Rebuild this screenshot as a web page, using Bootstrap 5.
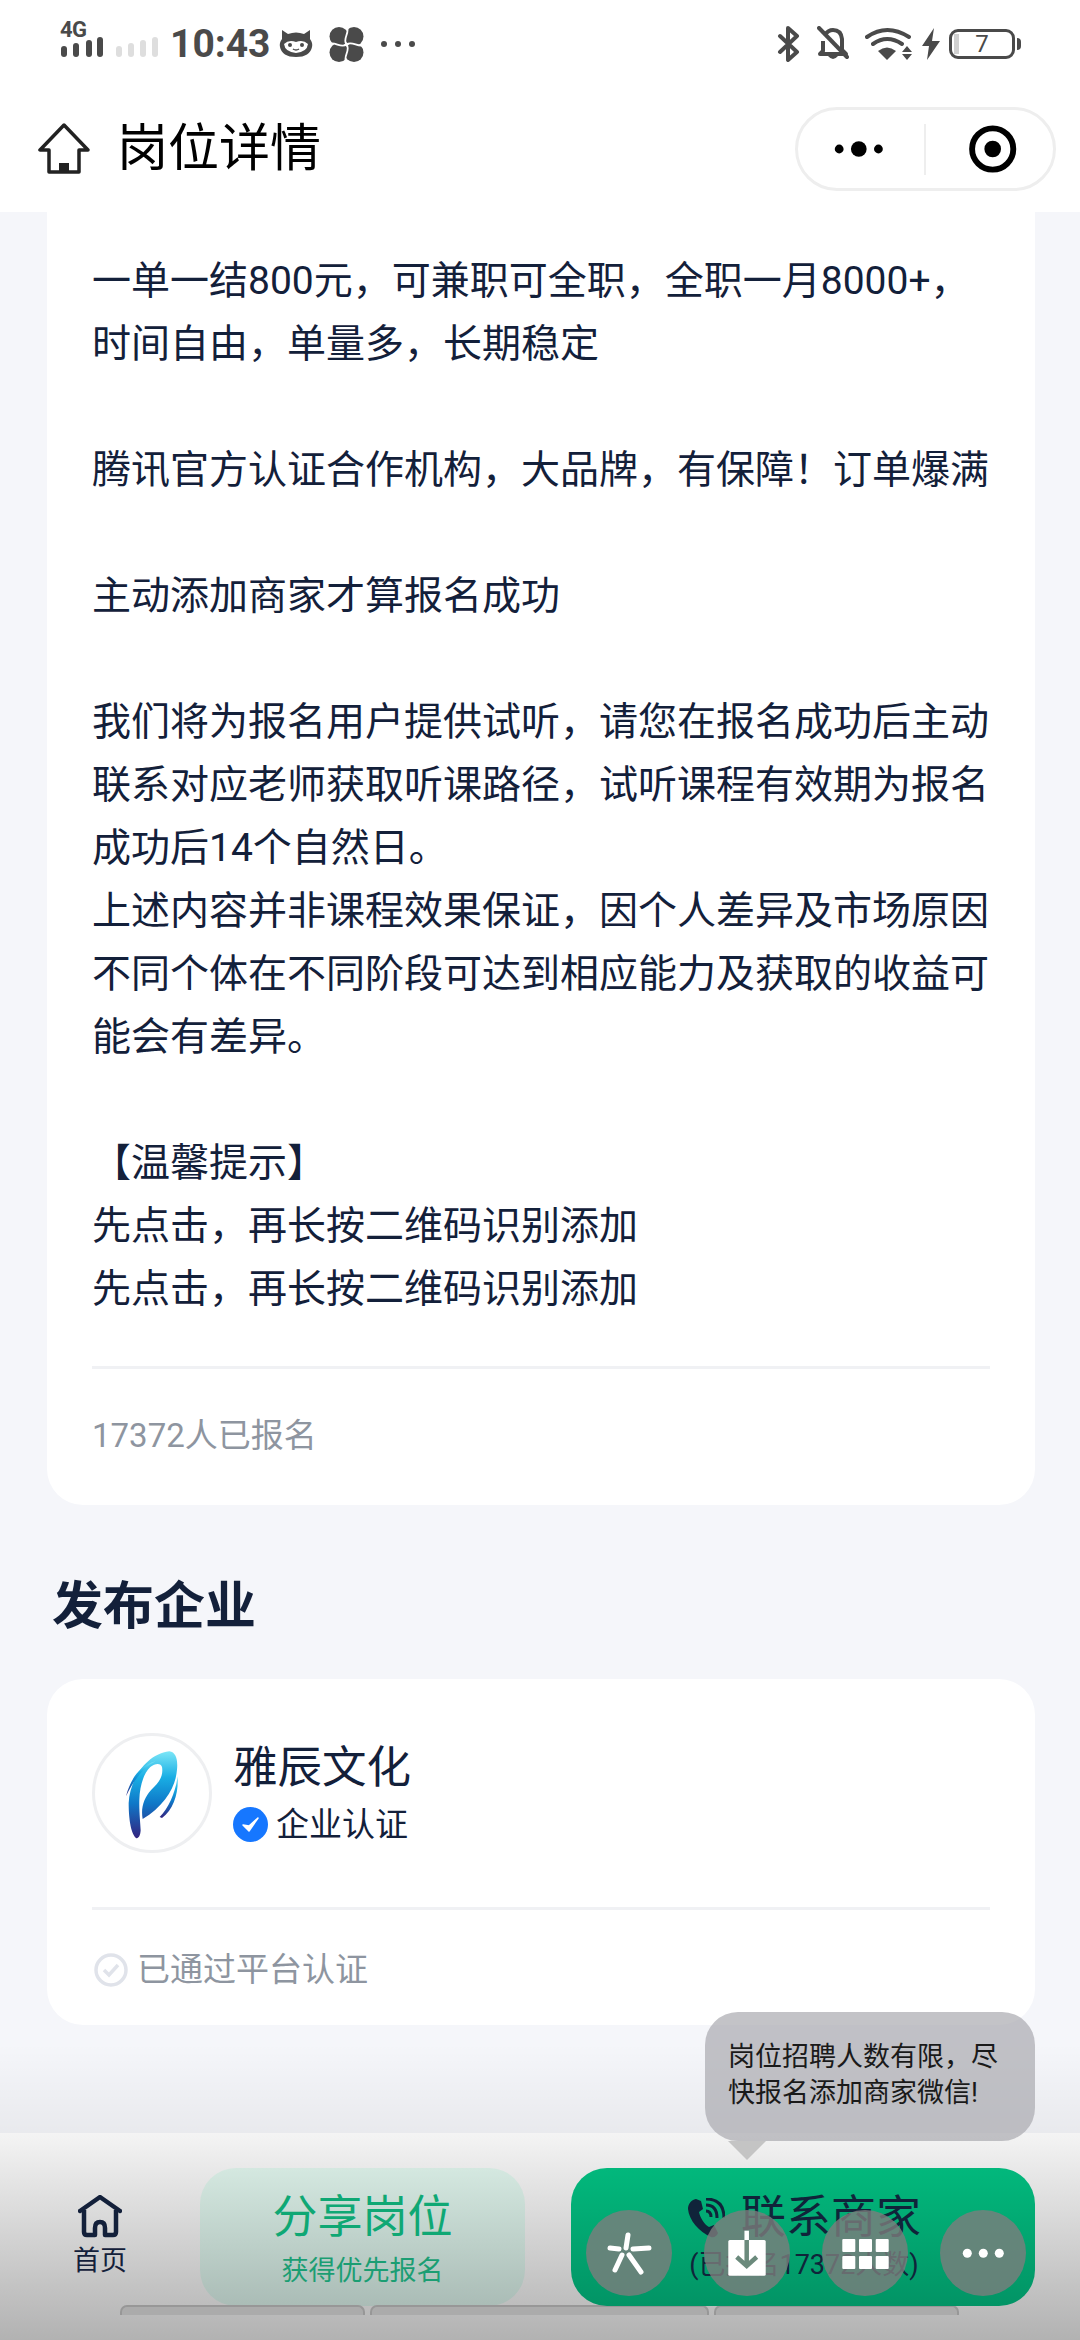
<!DOCTYPE html>
<html lang="zh-CN">
<head>
    <meta charset="UTF-8">
    <meta name="viewport" content="width=device-width, initial-scale=1.0">
    <title>岗位详情</title>
    <link href="https://cdn.jsdelivr.net/npm/bootstrap@5.3.0/dist/css/bootstrap.min.css" rel="stylesheet">
    <style>
        html, body { height: 100%; }
        body { font-family: Roboto, "Noto Sans CJK SC", sans-serif; background: #f5f6fa; color: #13203a; }
        .screen { position: relative; width: 1080px; height: 2340px; overflow: hidden; }

        .top-area { background: #fff; height: 212px; }
        .status-row { height: 88px; padding: 0 59px 0 60px; color: #4a4a4a; }
        .signal-wrap { position: relative; width: 100px; height: 40px; margin-right: 10px; }
        .net-type { position: absolute; left: 0; top: -4px; font-size: 22px; font-weight: 700; line-height: 20px; letter-spacing: -.5px; }
        .clock { font-size: 39px; font-weight: 700; line-height: 44px; }
        .batt { position: relative; width: 66px; height: 30px; border: 3px solid #4a4a4a; border-radius: 9px; font-size: 24px; line-height: 24px; text-align: center; color: #4a4a4a; margin-right: 6px; }
        .batt::before { content: ""; position: absolute; left: 2px; top: 2px; bottom: 2px; width: 5px; background: #d0d0d0; }
        .batt::after { content: ""; position: absolute; right: -9px; top: 6px; width: 4px; height: 12px; background: #4a4a4a; border-radius: 0 4px 4px 0; }

        .title-row { height: 124px; padding: 0 24px 2px 38px; }
        .page-title { font-size: 51px; line-height: 60px; color: #000; margin: 0 0 0 27px; font-weight: 400; }
        .capsule { width: 261px; height: 84px; border: 3px solid #eeeeee; border-radius: 42px; }
        .capsule-sep { width: 2px; height: 51px; background: #eeeeee; }

        .info-card { background: #fff; margin: 0 45px 0 47px; border-radius: 36px; }
        .info-card.first { border-radius: 0 0 36px 36px; padding: 38px 45px 0; height: 1293px; }
        .desc { font-size: 39px; line-height: 63px; color: #13203a; white-space: nowrap; }
        .hair { height: 3px; background: #f0f1f4; }
        .first .hair { margin-top: 45px; }
        .count-note { font-size: 33px; line-height: 44px; color: #8e95a0; margin-top: 45px; }

        .sec-title { font-size: 51px; line-height: 60px; font-weight: 700; margin: 72px 0 42px 52px; color: #13203a; }
        .info-card.second { height: 346px; padding: 54px 45px 0; }
        .avatar { width: 120px; height: 120px; border: 3px solid #eeeff1; border-radius: 50%; }
        .co-block { margin-left: 21px; }
        .co-name { font-size: 44.5px; line-height: 56px; color: #13203a; }
        .co-tag { font-size: 33px; line-height: 44px; color: #13203a; margin-top: 7px; }
        .second .hair { margin-top: 54px; }
        .verified { font-size: 33px; line-height: 44px; color: #8e95a0; margin-top: 38px; padding-left: 2px; }
        .verified svg { margin-right: 9px; }

        .bottom-bar { position: absolute; left: 0; right: 0; bottom: 0; height: 207px; background: linear-gradient(#f4f4f4, #b2b2b2); }
        .bottom-bar::before { content: ""; position: absolute; left: 0; right: 0; bottom: 100%; height: 90px; background: linear-gradient(rgba(0,0,0,0), rgba(0,0,0,.05)); }
        .bar-row { padding-top: 35px; height: 173px; }
        .home-tab { width: 200px; font-size: 27px; line-height: 36px; color: #13203a; padding-top: 27px; }
        .share-btn { width: 325px; height: 138px; border-radius: 36px; background: linear-gradient(#d4e8e0, #aabcb6); color: #0fa874; padding-top: 27px; }
        .contact-btn { position: relative; width: 464px; height: 138px; margin-left: 46px; border-radius: 36px; background: linear-gradient(#02b87c, #029465); color: #10243a; padding: 27px 0 0 2px; }
        .btn-big { font-size: 45px; line-height: 46px; }
        .share-sub { font-size: 27px; line-height: 30px; margin-top: 15px; color: #1b9e73; }
        .contact-sub { font-size: 27px; line-height: 36px; margin-top: 6px; }

        .tip { position: absolute; left: 134px; bottom: 165px; width: 330px; padding: 27px 23px 30px; border-radius: 33px; background: rgba(170,170,175,.7); font-size: 27px; line-height: 36px; color: #1a1a1a; }
        .tip::after { content: ""; position: absolute; left: 23px; top: 100%; border-style: solid; border-width: 19px 19px 0; border-color: #c4c4c4 transparent transparent; }

        .float-tools { position: absolute; left: 586px; top: 2210px; gap: 32px; }
        .tool { width: 86px; height: 86px; border-radius: 50%; background: rgba(125,125,125,.8); }
        .nub-row { padding-left: 120px; margin-top: -1px; gap: 5px; }
        .nub { height: 10px; border: 2px solid #979797; border-bottom: 0; border-radius: 7px 7px 0 0; background: #ababab; }
    </style>
</head>
<body>
<div class="screen">
    <div class="top-area">
        <div class="status-row d-flex align-items-center justify-content-between">
            <div class="d-flex align-items-center">
                <div class="signal-wrap">
                    <span class="net-type">4G</span>
                    <svg width="100" height="40" viewBox="0 0 100 40" class="d-block">
                        <g fill="#4a4a4a"><rect x="1" y="22" width="6" height="11" rx="3"/><rect x="13" y="19" width="6" height="14" rx="3"/><rect x="26" y="16" width="6" height="17" rx="3"/><rect x="37" y="13" width="6" height="20" rx="3"/></g>
                        <g fill="#dedede"><rect x="56" y="22" width="6" height="11" rx="3"/><rect x="68" y="19" width="6" height="14" rx="3"/><rect x="80" y="16" width="6" height="17" rx="3"/><rect x="92" y="13" width="6" height="20" rx="3"/></g>
                    </svg>
                </div>
                <span class="clock">10:43</span>
                <svg width="34" height="30" viewBox="0 0 34 30" class="ms-2">
                    <path d="M3 1 L9 5 Q17 2 25 5 L31 1 L31 10 Q34 14 33 18 Q31 28 17 28 Q3 28 1 18 Q0 14 3 10 Z" fill="#4a4a4a"/>
                    <path d="M5 15 Q10 10 17 13 Q24 10 29 15 Q28 23 17 24 Q6 23 5 15 Z" fill="#fff"/>
                    <circle cx="11" cy="16" r="2" fill="#4a4a4a"/><circle cx="23" cy="16" r="2" fill="#4a4a4a"/>
                    <path d="M14 20 Q17 22 20 20" stroke="#4a4a4a" stroke-width="1.5" fill="none"/>
                </svg>
                <svg width="35" height="35" viewBox="0 0 35 35" class="ms-3">
                    <g fill="#4a4a4a">
                        <circle cx="10" cy="9.5" r="9.5"/><circle cx="25" cy="9.5" r="9.5"/><circle cx="10" cy="25.5" r="9.5"/><circle cx="25" cy="25.5" r="9.5"/>
                    </g>
                    <g fill="none" stroke="#fff" stroke-width="1.8">
                        <path d="M17.5 17.5 C13 12 21 6 18 0"/>
                        <path d="M17.5 17.5 C23 13 29 21 35 18"/>
                        <path d="M17.5 17.5 C22 23 14 29 17 35"/>
                        <path d="M17.5 17.5 C12 22 6 14 0 17"/>
                    </g>
                </svg>
                <svg width="36" height="8" viewBox="0 0 36 8" class="ms-3"><g fill="#4a4a4a"><circle cx="4" cy="4" r="3"/><circle cx="18" cy="4" r="3"/><circle cx="32" cy="4" r="3"/></g></svg>
            </div>
            <div class="d-flex align-items-center">
                <svg width="24" height="36" viewBox="0 0 24 36"><path d="M3 10 L20 26 L11 34 V2 L20 10 L3 26" fill="none" stroke="#4a4a4a" stroke-width="4" stroke-linecap="round" stroke-linejoin="round"/></svg>
                <svg width="32" height="36" viewBox="0 0 32 36" class="ms-3">
                    <path d="M8 9 Q11 4 16 4 Q24 4 25 13 V24 L29 28 H3 L6 25 V15" fill="none" stroke="#4a4a4a" stroke-width="4" stroke-linejoin="round"/>
                    <path d="M11 30 Q16 36 21 30 Z" fill="#4a4a4a"/>
                    <path d="M2 2 L30 31" stroke="#4a4a4a" stroke-width="4" stroke-linecap="round"/>
                </svg>
                <svg width="48" height="34" viewBox="0 0 48 34" class="ms-3">
                    <path d="M2 10 Q22 -4 44 10 M8 17 Q22 7 37 17" fill="none" stroke="#4a4a4a" stroke-width="4" stroke-linecap="round"/>
                    <path d="M13 24 Q22 17 31 24 L22 33 Z" fill="#4a4a4a"/>
                    <path d="M42 19 L47 25 H37 Z M37 27 H47 L42 33 Z" fill="#4a4a4a"/>
                </svg>
                <svg width="20" height="32" viewBox="0 0 20 32" class="ms-2"><path d="M13 0 L1 18 H8 L6 32 L19 13 H11 Z" fill="#4a4a4a"/></svg>
                <div class="batt ms-2">7</div>
            </div>
        </div>
        <div class="title-row d-flex align-items-center justify-content-between">
            <div class="d-flex align-items-center">
                <svg width="52" height="52" viewBox="0 0 52 52">
                    <path d="M26 2 L2 27 H11 V49 H41 V27 H50 Z" fill="none" stroke="#222" stroke-width="3.5" stroke-linejoin="round"/>
                    <rect x="21" y="40" width="10" height="9" fill="#222"/>
                </svg>
                <h1 class="page-title">岗位详情</h1>
            </div>
            <div class="capsule d-flex align-items-center">
                <svg width="128" height="20" viewBox="0 0 128 20"><g fill="#000"><circle cx="42" cy="10" r="4.5"/><circle cx="62" cy="10" r="8"/><circle cx="82" cy="10" r="4.5"/></g></svg>
                <div class="capsule-sep"></div>
                <svg width="130" height="50" viewBox="0 0 130 50"><circle cx="68" cy="25" r="21" fill="none" stroke="#000" stroke-width="6"/><circle cx="68" cy="25" r="8.5" fill="#000"/></svg>
            </div>
        </div>
    </div>

    <div class="info-card first">
        <div class="desc">
            一单一结800元，可兼职可全职，全职一月8000+，<br>
            时间自由，单量多，长期稳定<br>
            <br>
            腾讯官方认证合作机构，大品牌，有保障！订单爆满<br>
            <br>
            主动添加商家才算报名成功<br>
            <br>
            我们将为报名用户提供试听，请您在报名成功后主动<br>
            联系对应老师获取听课路径，试听课程有效期为报名<br>
            成功后14个自然日。<br>
            上述内容并非课程效果保证，因个人差异及市场原因<br>
            不同个体在不同阶段可达到相应能力及获取的收益可<br>
            能会有差异。<br>
            <br>
            【温馨提示】<br>
            先点击，再长按二维码识别添加<br>
            先点击，再长按二维码识别添加
        </div>
        <div class="hair"></div>
        <div class="count-note">17372人已报名</div>
    </div>

    <div class="sec-title">发布企业</div>

    <div class="info-card second">
        <div class="d-flex align-items-center">
            <div class="avatar d-flex align-items-center justify-content-center flex-shrink-0">
                <svg width="80" height="100" viewBox="0 0 240 300">
                    <defs>
                        <linearGradient id="logoGrad" x1="0" y1="0" x2="0" y2="1">
                            <stop offset="0" stop-color="#7ce6f7"/>
                            <stop offset=".3" stop-color="#19aee4"/>
                            <stop offset=".6" stop-color="#0f78c8"/>
                            <stop offset="1" stop-color="#33237f"/>
                        </linearGradient>
                    </defs>
                    <path fill="url(#logoGrad)" d="M172 25 C196 28 200 60 192 100 C185 140 150 195 92 228 C86 195 95 165 118 140 C140 120 155 100 150 72 C147 60 130 60 115 72 C95 90 83 130 82 170 C81 205 85 240 86 262 C85 280 78 288 72 285 C55 270 50 220 50 180 C52 120 95 35 172 25 Z"/>
                    <path fill="url(#logoGrad)" d="M42 160 C55 110 80 70 130 55 C95 75 65 110 42 160 Z"/>
                    <path fill="url(#logoGrad)" d="M143 222 C170 195 190 150 197 100 C200 150 185 200 150 225 Z"/>
                </svg>
            </div>
            <div class="co-block">
                <div class="co-name">雅辰文化</div>
                <div class="co-tag d-flex align-items-center">
                    <svg width="35" height="35" viewBox="0 0 35 35" class="me-2"><circle cx="17.5" cy="17.5" r="17.5" fill="#1677ff"/><path d="M10 18 L16 24 L25 11 L16 19 Z" fill="#fff" stroke="#fff" stroke-width="1.5" stroke-linejoin="round"/></svg>
                    企业认证
                </div>
            </div>
        </div>
        <div class="hair"></div>
        <div class="verified d-flex align-items-center">
            <svg width="34" height="34" viewBox="0 0 34 34"><circle cx="17" cy="17" r="15" fill="none" stroke="#e0e3ea" stroke-width="3.5"/><path d="M10 17 L15 22 L24 12" fill="none" stroke="#e0e3ea" stroke-width="3.5"/></svg>
            已通过平台认证
        </div>
    </div>

    <div class="bottom-bar">
        <div class="bar-row d-flex">
            <div class="home-tab d-flex flex-column align-items-center">
                <svg width="44" height="44" viewBox="0 0 44 44" class="mb-1">
                    <path d="M2 16 L22 2 L42 16" fill="none" stroke="#13203a" stroke-width="4.5" stroke-linecap="round" stroke-linejoin="round"/>
                    <path d="M6 15 V37 Q6 40 9 40 H17 V33 Q17 27 22 27 Q27 27 27 33 V40 H35 Q38 40 38 37 V15" fill="none" stroke="#13203a" stroke-width="4.5" stroke-linejoin="round"/>
                </svg>
                首页
            </div>
            <div class="share-btn text-center">
                <div class="btn-big">分享岗位</div>
                <div class="share-sub">获得优先报名</div>
            </div>
            <div class="contact-btn text-center">
                <div class="tip text-start">岗位招聘人数有限，尽快报名添加商家微信!</div>
                <div class="btn-big d-flex justify-content-center align-items-center">
                    <svg width="38" height="40" viewBox="0 0 38 40" class="me-3">
                        <path d="M9 1 C4 2 1 6 1 11 C2 22 12 34 24 39 C27 40 30 38 31 35 L27 27 L22 29 C18 27 13 20 12 14 L16 11 L14 3 Z" fill="#10243a"/>
                        <path d="M19 13 Q24 13 24 19 M19 7 Q30 7 30 20 M19 1 Q37 1 37 20" fill="none" stroke="#10243a" stroke-width="3"/>
                    </svg>
                    联系商家
                </div>
                <div class="contact-sub">(已报名17372人数)</div>
            </div>
        </div>
        <div class="nub-row d-flex">
            <div class="nub" style="width: 245px"></div>
            <div class="nub" style="width: 339px"></div>
            <div class="nub" style="width: 245px"></div>
        </div>
    </div>

    <div class="float-tools d-flex">
        <div class="tool">
            <svg width="86" height="86" viewBox="0 0 86 86"><path d="M42 25 L40 38 M24 38 L33 39 M47 39 L63 38 M29 60 L36 45 M55 62 L43 45" stroke="#fff" stroke-width="5" stroke-linecap="round" fill="none"/></svg>
        </div>
        <div class="tool">
            <svg width="86" height="86" viewBox="0 0 86 86">
                <rect x="24.3" y="30" width="37.4" height="35.7" rx="1.5" fill="#fff"/>
                <path d="M42.7 20.7 V30" stroke="#fff" stroke-width="4.5" fill="none"/>
                <path d="M42.7 30 V54 M32.7 47 L42.7 56 L52.7 47" stroke="#6b8a7c" stroke-width="4.5" fill="none"/>
            </svg>
        </div>
        <div class="tool">
            <svg width="86" height="86" viewBox="0 0 86 86"><g fill="#fff"><rect x="20.3" y="29" width="13" height="13" rx="1"/><rect x="37" y="29" width="13" height="13" rx="1"/><rect x="53.7" y="29" width="13" height="13" rx="1"/><rect x="20.3" y="46" width="13" height="13" rx="1"/><rect x="37" y="46" width="13" height="13" rx="1"/><rect x="53.7" y="46" width="13" height="13" rx="1"/></g></svg>
        </div>
        <div class="tool">
            <svg width="86" height="86" viewBox="0 0 86 86"><g fill="#fff"><circle cx="27.3" cy="43.3" r="4.5"/><circle cx="43.3" cy="43.3" r="4.5"/><circle cx="59.3" cy="43.3" r="4.5"/></g></svg>
        </div>
    </div>
</div>
<script src="https://cdn.jsdelivr.net/npm/bootstrap@5.3.0/dist/js/bootstrap.bundle.min.js"></script>
</body>
</html>
